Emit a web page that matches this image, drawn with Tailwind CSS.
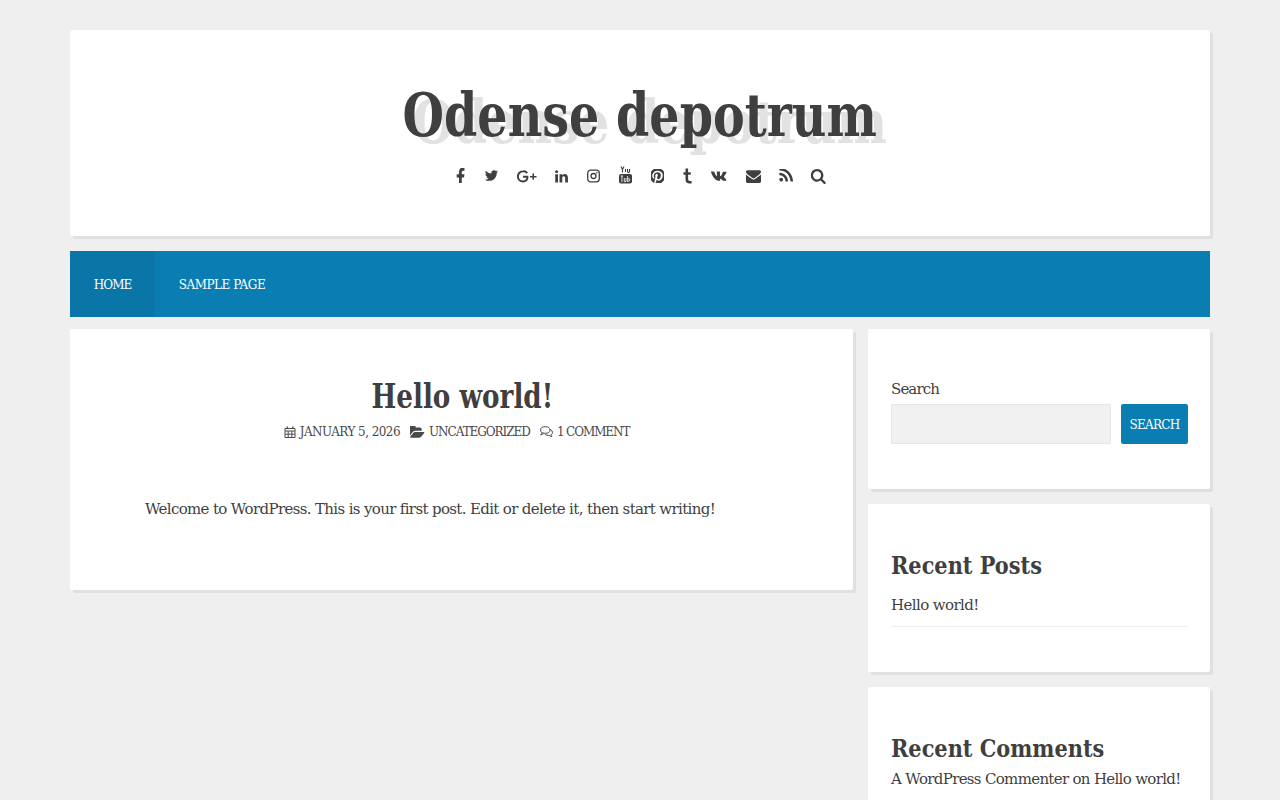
<!DOCTYPE html>
<html lang="en">
<head>
    <meta charset="UTF-8">
    <meta name="viewport" content="width=device-width, initial-scale=1.0">
    <title>Odense depotrum</title>
    <script src="https://cdn.jsdelivr.net/npm/@tailwindcss/browser@4"></script>
</head>
<body class="bg-[#efefef] h-screen overflow-hidden font-['DejaVu_Serif',serif] text-[#3f3f3f]">
    <div class="w-[1140px] mx-auto pt-[30px]">

        <!-- Site header -->
        <header class="h-[206px] bg-white rounded-[2px] shadow-[3px_3px_0_#e0e0e0] flex flex-col items-center">
            <h1 class="mt-[49px] h-[72px] leading-[72px] text-[60px] font-bold scale-x-[0.794] text-[#3f3f3f] [text-shadow:12.5px_7px_0_#e2e2e2] whitespace-nowrap">Odense depotrum</h1>
            <div class="mt-[15px] w-full h-[20px] pl-[386px] flex items-start text-[#3f3f3f]">
                <svg class="shrink-0 mt-[2px] w-[9px] h-[15px]" viewBox="400 200 1000 1400" preserveAspectRatio="none" fill="currentColor"><path d="M1343 12v264h-157q-86 0-116 36t-30 108v189h293l-39 296h-254v759h-306v-759h-255v-296h255v-218q0-186 104-288.5t277-102.5q147 0 228 12z" transform="translate(0 180)"/></svg>
                <svg class="shrink-0 ml-[19px] mt-[2px] w-[15px] h-[15px]" viewBox="0 0 1792 1792" fill="currentColor"><path d="M1684 408q-67 98-162 167 1 14 1 42 0 130-38 259.5t-115.5 248.5-184.5 210.5-258 146-323 54.5q-271 0-496-145 35 4 77 4 225 0 401-138-105-2-188-64.5t-114-159.5q33 5 61 5 43 0 85-11-112-23-185.5-111.5t-73.5-205.5v-4q68 38 146 41-66-44-105-115t-39-154q0-88 44-163 121 149 294.5 238.5t371.5 99.5q-8-38-8-74 0-134 94.5-228.5t228.5-94.5q140 0 236 102 109-21 205-78-37 115-142 178 97-11 186-50z"/></svg>
                <svg class="shrink-0 ml-[17px] mt-[4px] w-[21px] h-[13px]" viewBox="0 0 21 13" fill="none" stroke="currentColor"><path d="M11.200 3.100A4.600 4.600 0 0 0 7 1.300a5 5 0 0 0 0 10.200c3 0 4.600-2 4.400-4.800H7" stroke-width="2"/><path d="M14 6.700h6.500M17.250 3.600v6.200" stroke-width="1.600"/></svg>
                <svg class="shrink-0 ml-[17px] mt-[3px] w-[15px] h-[15px]" viewBox="0 0 1792 1792" fill="currentColor"><path d="M477 625v991h-330v-991h330zm21-306q1 73-50.500 122t-135.500 49h-2q-82 0-132-49t-50-122q0-74 51.500-122.500t134.500-48.500 133 48.500 51 122.500zm1166 729v568h-329v-530q0-105-40.500-164.500t-126.500-59.500q-63 0-105.500 34.500t-63.500 85.500q-11 30-11 81v553h-329q2-399 2-647t-1-296l-1-48h329v144h-2q20-32 41-56t56.500-52 87-43.500 114.500-15.500q171 0 275 113.500t104 332.500z"/></svg>
                <svg class="shrink-0 ml-[18px] mt-[3px] w-[13px] h-[14px]" viewBox="0 0 13 14" fill="none" stroke="currentColor" stroke-width="1.300"><rect x="0.700" y="1.200" width="11.600" height="11.600" rx="3"/><circle cx="6.500" cy="7" r="2.500"/><circle cx="9.800" cy="3.700" r="0.800" fill="currentColor" stroke="none"/></svg>
                <svg class="shrink-0 ml-[19px] mt-[0px] w-[13px] h-[18px]" viewBox="0 0 13 18" fill="none"><path d="M2 .5l1.500 3 1.500-3M3.500 3.500v3M6.500 3v3M8.500 3v2.600q0 .8.9.8t1.100-.8V3" stroke="currentColor" stroke-width="1.100"/><rect y="8" width="13" height="9.600" rx="2" fill="currentColor"/><path d="M1.600 10h2.600M2.900 10v6M5.300 12v3.400q0 .7.7.5l1-.6V12M8.600 10v6M8.600 13q2.200-1.200 2.200.8t-2.200 1.400" stroke="#fff" stroke-width=".8"/></svg>
                <svg class="shrink-0 ml-[19px] mt-[3px] w-[13px] h-[14px]" viewBox="128 256 1280 1280" fill="currentColor"><path d="M1408 896q0 209-103 385.500t-279.500 279.500-385.500 103q-111 0-218-32 59-93 78-164 9-34 54-211 20 39 73 67.500t114 28.500q121 0 216-68.500t147-188.500 52-270q0-114-59.500-214t-172.500-163-255-63q-105 0-196 29t-154.500 77-109 110.500-67 129.500-21.500 134q0 104 40 183t117 111q30 12 38-20 2-7 8-31t8-30q6-23-11-43-51-61-51-151 0-151 104.500-259.500t273.500-108.500q151 0 235.500 82t84.500 213q0 170-68.500 289t-175.500 119q-61 0-98-43.500t-23-104.500q8-35 26.500-93.500t30-103 11.500-75.500q0-50-27-83t-77-33q-62 0-105 57t-43 142q0 73 25 122l-99 418q-17 70-13 177-206-91-333-281t-127-423q0-209 103-385.500t279.500-279.500 385.500-103 385.500 103 279.500 279.500 103 385.500z" transform="translate(128 0)" /></svg>
                <svg class="shrink-0 ml-[19px] mt-[2px] w-[9px] h-[16px]" viewBox="0 0 9 16" fill="none" stroke="currentColor" stroke-width="2.600"><path d="M3.800 .5v10.800q0 3 3 3H8.600"/><path d="M.4 5.500h7.400" stroke-width="2.400"/></svg>
                <svg class="shrink-0 ml-[19px] mt-[5px] w-[16px] h-[10px]" viewBox="0 0 16 10" fill="currentColor"><path d="M0 .4h2.800q.4 0 .7.8 1 3 2 3.900.4.3.4-.6V1.600Q5.900.9 5.300.4h3.400q.3 0 .3.5v3.900q0 .6.4.4 1.300-.9 2.300-3.800.1-.6.7-.6h2.700q.7 0 .4.8-.6 1.500-2.400 3.700-.3.500 0 .9 1.800 1.700 2.300 2.700.4.8-.4.900h-2.500q-.7 0-1.300-.8-.9-1.100-1.400-1.300-.5-.2-.6.4v1.200q0 .5-.6.500h-1C4.500 9.700 1.700 6.400 0 1.100q-.2-.7 0-.7z"/></svg>
                <svg class="shrink-0 ml-[19px] mt-[4px] w-[15px] h-[13px]" viewBox="0 224 1792 1440" preserveAspectRatio="none" fill="currentColor"><path d="M1792 710v794q0 66-47 113t-113 47h-1472q-66 0-113-47t-47-113v-794q44 49 101 87 362 246 497 345 57 42 92.500 65.500t94.500 48 110 24.500h2q51 0 110-24.500t94.500-48 92.500-65.500q170-123 498-345 57-39 100-87zm0-294q0 79-49 151t-122 123q-376 261-468 325-10 7-42.500 30.500t-54 38-52 32.500-57.500 27-50 9h-2q-23 0-50-9t-57.500-27-52-32.500-54-38-42.500-30.500q-91-64-262-182.500t-205-142.500q-62-42-117-115.500t-55-136.500q0-78 41.500-130t118.500-52h1472q65 0 112.500 47t47.500 113z"/></svg>
                <svg class="shrink-0 ml-[18px] mt-[3px] w-[14px] h-[14px]" viewBox="160 256 1440 1440" fill="currentColor"><path d="M576 1344q0 80-56 136t-136 56-136-56-56-136 56-136 136-56 136 56 56 136zm512 123q2 28-17 48-18 21-47 21h-135q-25 0-43-16.500t-20-41.500q-22-229-184.500-391.500t-391.500-184.500q-25-2-41.500-20t-16.500-43v-135q0-29 21-47 17-17 43-17h5q160 13 306 80.500t259 181.500q114 113 181.500 259t80.500 306zm512 2q2 27-18 47-18 20-46 20h-143q-26 0-44.500-17.500t-19.500-42.500q-12-215-101-408.500t-231.500-336-336-231.500-408.500-102q-25-1-42.500-19.500t-17.500-43.500v-143q0-28 20-46 18-18 44-18h3q262 13 501.500 120t425.500 294q187 186 294 425.500t120 501.500z"/></svg>
                <svg class="shrink-0 ml-[18px] mt-[3px] w-[15px] h-[15px]" viewBox="128 128 1600 1664" fill="currentColor"><path d="M1216 832q0-185-131.500-316.500t-316.500-131.500-316.500 131.500-131.500 316.500 131.500 316.500 316.500 131.500 316.500-131.500 131.500-316.500zm512 832q0 52-38 90t-90 38q-54 0-90-38l-343-342q-179 124-399 124-143 0-273.500-55.500t-225-150-150-225-55.500-273.500 55.500-273.500 150-225 225-150 273.500-55.500 273.500 55.500 225 150 150 225 55.500 273.500q0 220-124 399l343 343q37 37 37 90z"/></svg>
            </div>
        </header>

        <!-- Primary menu -->
        <nav class="mt-[15px] h-[66px] bg-[#0a7eb2] flex text-[12px] text-white uppercase">
            <a class="h-full w-[85px] pt-[2px] bg-[#0a76a7] flex items-center justify-center tracking-[-0.9px]">Home</a>
            <a class="h-full w-[134px] pt-[2px] flex items-center justify-center tracking-[-0.5px]">Sample Page</a>
        </nav>

        <div class="mt-[12px] flex gap-[15px] items-start">
            <!-- Post -->
            <main class="w-[783px] h-[261px] bg-white rounded-[2px] shadow-[3px_3px_0_#e0e0e0] flex flex-col items-center">
                <h2 class="mt-[46px] ml-[1px] h-[44px] leading-[44px] text-[33px] font-bold scale-x-[0.795]">Hello world!</h2>
                <div class="mt-[3px] pr-[10px] h-[20px] flex items-center text-[12px] uppercase text-[#4a4a4a] whitespace-nowrap">
                    <svg class="w-[12px] h-[12px] mr-[4px]" viewBox="0 0 11 12" fill="none" stroke="currentColor" stroke-width="1"><path d="M.5 2.500h10v9H.5zM.5 5h10M3.700 5v6.500M7.300 5v6.500M.5 8.200h10"/><path d="M2.700.5v2.500M8.300.5v2.500" stroke-width="1.300"/></svg>
                    <span class="tracking-[-0.55px]">January 5, 2026</span>
                    <svg class="w-[15px] h-[12px] ml-[10px] mr-[4px]" viewBox="0 176 1920 1408" preserveAspectRatio="none" fill="currentColor"><path d="M1845 931q0 35-53 93l-336 396q-43 51-120.500 86.500t-143.500 35.500h-1088q-34 0-60.500-13t-26.500-43q0-35 53-93l336-396q43-51 120.500-86.500t143.500-35.500h1088q34 0 60.500 13t26.500 43zm-343-344v160h-832q-94 0-197 47.500t-164 119.500l-337 396-5 6q0-4-.5-12.500t-.5-12.500v-960q0-92 66-158t158-66h320q92 0 158 66t66 158v32h544q92 0 158 66t66 158z"/></svg>
                    <span class="tracking-[-1.05px]">Uncategorized</span>
                    <svg class="w-[13px] h-[12px] ml-[10px] mr-[4px]" viewBox="0 0 13 12" fill="none" stroke="currentColor" stroke-width="1"><ellipse cx="5.300" cy="4" rx="4.700" ry="3.300"/><path d="M2 6.500q-.3 1.500-1.300 2.300 2-.2 3-1.300"/><path d="M10.300 3.500q2.200 1 2.200 2.800 0 1.500-1.500 2.500.2 1.200.9 1.800-1.900-.2-2.800-1.300-2.400.3-3.900-1"/></svg>
                    <span class="tracking-[-1.1px]">1 Comment</span>
                </div>
                <p class="mt-[55px] pl-[75px] pr-[60px] w-full h-[24px] leading-[24px] text-[15px] tracking-[-0.65px] text-[#3f3f3f] whitespace-nowrap">Welcome to WordPress. This is your first post. Edit or delete it, then start writing!</p>
            </main>

            <!-- Sidebar -->
            <aside class="w-[342px] flex flex-col gap-[15px]">
                <section class="h-[160px] bg-white rounded-[2px] shadow-[3px_3px_0_#e0e0e0] pl-[23px] pr-[22px] pt-[50px]">
                    <label class="block h-[21px] leading-[20px] text-[15px] tracking-[-0.9px]">Search</label>
                    <div class="mt-[4px] flex justify-between">
                        <input type="text" class="w-[220px] h-[40px] bg-[#f1f1f1] border border-[#e5e5e5] rounded-[1px]">
                        <button class="w-[67px] h-[40px] pt-[2px] bg-[#0a7eb2] rounded-[2px] text-white text-[12px] uppercase tracking-[-0.7px]">Search</button>
                    </div>
                </section>

                <section class="h-[168px] bg-white rounded-[2px] shadow-[3px_3px_0_#e0e0e0] pl-[23px] pr-[22px] pt-[45px]">
                    <h3 class="h-[34px] leading-[34px] text-[24px] font-bold origin-left scale-x-[0.87] whitespace-nowrap">Recent Posts</h3>
                    <div class="mt-[11px] border-b border-[#eeeeee] h-[33px] leading-[22px] text-[15px] tracking-[-0.6px]">Hello world!</div>
                </section>

                <section class="h-[168px] bg-white rounded-[2px] shadow-[3px_3px_0_#e0e0e0] pl-[23px] pr-[22px] pt-[45px]">
                    <h3 class="h-[34px] leading-[34px] text-[24px] font-bold origin-left scale-x-[0.87] whitespace-nowrap">Recent Comments</h3>
                    <div class="mt-[2px] leading-[22px] text-[15px] tracking-[-0.68px] whitespace-nowrap">A WordPress Commenter on Hello world!</div>
                </section>
            </aside>
        </div>
    </div>
</body>
</html>
